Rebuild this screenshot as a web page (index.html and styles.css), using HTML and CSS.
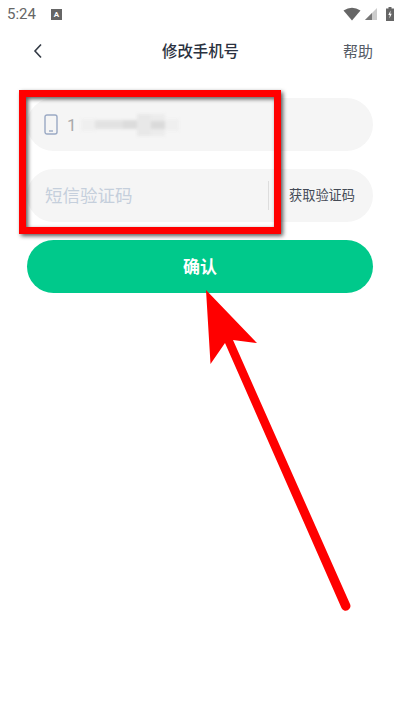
FILE: index.html
```html
<!DOCTYPE html>
<html lang="zh-CN">
<head>
  <meta charset="UTF-8" />
  <meta name="viewport" content="width=device-width, initial-scale=1.0" />
  <title>修改手机号</title>
  <link rel="stylesheet" href="styles.css">
</head>
<body>
  <div class="status-bar">
    <span class="time">5:24</span>
    <span class="notice">A</span>
    <span class="status-icons">
      <svg width="18" height="14" viewBox="0 0 18 14"><path d="M0.5 3.5 Q9 -2 17.5 3.500 L9 13.500 Z" fill="#666"/></svg>
      <svg width="14" height="14" viewBox="0 0 14 14"><path d="M13 1 V13 H1 Z" fill="#ccc"/><path d="M8 6 V13 H1 Z" fill="#777"/></svg>
      <svg class="battery" width="8" height="14" viewBox="0 0 8 14"><path d="M2.500 0 H5.500 V1.500 H8 V14 H0 V1.500 H2.500 Z" fill="#666"/><path d="M4.600 3.500 L2.300 8 H3.800 L3.400 11.500 L5.700 6.800 H4.200 Z" fill="#fff"/></svg>
    </span>
  </div>

  <header class="nav">
    <svg class="back" width="10" height="16" viewBox="0 0 10 16"><path d="M8 1.500 L2 8 L8 14.500" fill="none" stroke="#333a45" stroke-width="1.600"/></svg>
    <h1>修改手机号</h1>
    <span class="help">帮助</span>
  </header>

  <main class="form">
    <div class="field">
      <svg class="phone" width="14" height="21" viewBox="0 0 14 21"><rect x="1" y="1" width="12" height="19" rx="2" fill="none" stroke="#9aa9c4" stroke-width="1.400"/><path d="M5 17 H9" stroke="#9aa9c4" stroke-width="1.400"/></svg>
      <span class="number">1</span>
      <span class="mosaic">
        <i class="m1"></i><i class="m2"></i><i class="m2"></i><i class="m3"></i><i class="m4"></i><i class="m5"></i><i class="m1"></i>
      </span>
    </div>
    <div class="field">
      <span class="placeholder">短信验证码</span>
      <span class="divider"></span>
      <span class="get-code">获取验证码</span>
    </div>
    <button class="confirm">确认</button>
  </main>

  <!-- red marks drawn on top of the screenshot -->
  <svg class="marks" width="400" height="711" viewBox="0 0 400 711">
    <defs>
      <filter id="shadow" x="-10%" y="-10%" width="120%" height="120%">
        <feDropShadow dx="2" dy="2" stdDeviation="2" flood-color="#000" flood-opacity="0.65"/>
      </filter>
    </defs>
    <rect x="22.500" y="93.500" width="255" height="137" fill="none" stroke="#f00" stroke-width="7" filter="url(#shadow)"/>
    <path d="M206 290 L257 343 L233 340 L350 604 A4.600 4.600 0 0 1 341.500 608 L225 343 L210.500 364 Z" fill="#f00"/>
  </svg>
</body>
</html>
```

FILE: styles.css
```css
* {
  box-sizing: border-box;
}

body {
  margin: 0;
  width: 400px;
  height: 711px;
  position: relative;
  overflow: hidden;
  background: #fff;
  font-family: 'Noto Sans CJK SC', 'Noto Sans', sans-serif;
}

.status-bar {
  height: 28px;
  padding: 0 6px 0 7px;
  display: flex;
  align-items: center;
  color: #666;
}

.time {
  font-family: Roboto, sans-serif;
  font-size: 15px;
}

.notice {
  width: 11px;
  height: 11px;
  margin-left: 15px;
  background: #666;
  color: #fff;
  font-family: Roboto, sans-serif;
  font-size: 8px;
  font-weight: 700;
  line-height: 11px;
  text-align: center;
}

.status-icons {
  margin-left: auto;
  display: flex;
  align-items: center;
  gap: 3px;
}

.battery {
  margin-left: 5px;
}

.nav {
  height: 46px;
  padding: 0 27px 2px 33px;
  display: flex;
  align-items: center;
  justify-content: space-between;
}

.nav .back {
  margin-top: 2px;
}

.nav h1 {
  margin: 0 0 0 15px;
  font-size: 15.400px;
  font-weight: 500;
  color: #2b3240;
}

.help {
  font-size: 15px;
  color: #555b66;
}

.form {
  padding: 24px 27px 0;
  display: flex;
  flex-direction: column;
  gap: 18px;
}

.field {
  height: 53px;
  padding: 0 18px 2px;
  display: flex;
  align-items: center;
  background: #f5f5f5;
  border-radius: 27px;
}

.phone {
  margin: 2px 0 0 -1px;
}

.number {
  margin: 2px 0 0 9px;
  font-family: Roboto, sans-serif;
  font-size: 17px;
  color: #aaa;
}

.mosaic {
  margin: 2px 0 0 4px;
  display: flex;
  align-items: center;
  filter: blur(1.500px);
}

.mosaic i {
  display: block;
  width: 14px;
}

.m1 { height: 12px; background: #efefef; }
.m2 { height: 9px; background: #e2e2e2; }
.m3 { height: 9px; background: #dcdcdc; }
.m4 { height: 22px; background: #e8e8e8; }
.m5 { height: 22px; background: linear-gradient(#ececec 30%, #dadada 30%, #dadada 70%, #ececec 70%); }

.placeholder {
  font-size: 17.500px;
  color: #c5cfdc;
}

.divider {
  width: 1px;
  height: 29px;
  margin: 2px 0 0 auto;
  background: #ddd;
}

.get-code {
  margin: 0 0 0 20px;
  font-size: 13.200px;
  color: #444a55;
}

.confirm {
  height: 53px;
  padding: 0 0 2px;
  border: none;
  border-radius: 27px;
  background: #00c98b;
  color: #fff;
  font-family: inherit;
  font-size: 17px;
  font-weight: 700;
}

.marks {
  position: absolute;
  left: 0;
  top: 0;
}
```
